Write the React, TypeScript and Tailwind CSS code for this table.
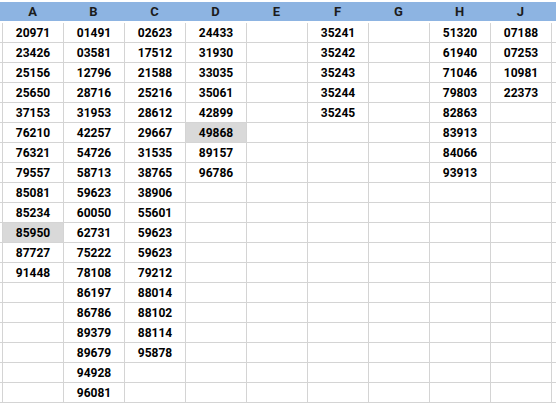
const headers = ["A", "B", "C", "D", "E", "F", "G", "H", "J"];

const columns: string[][] = [
  ["20971", "23426", "25156", "25650", "37153", "76210", "76321", "79557", "85081", "85234", "85950", "87727", "91448"],
  ["01491", "03581", "12796", "28716", "31953", "42257", "54726", "58713", "59623", "60050", "62731", "75222", "78108", "86197", "86786", "89379", "89679", "94928", "96081"],
  ["02623", "17512", "21588", "25216", "28612", "29667", "31535", "38765", "38906", "55601", "59623", "59623", "79212", "88014", "88102", "88114", "95878"],
  ["24433", "31930", "33035", "35061", "42899", "49868", "89157", "96786"],
  [],
  ["35241", "35242", "35243", "35244", "35245"],
  [],
  ["51320", "61940", "71046", "79803", "82863", "83913", "84066", "93913"],
  ["07188", "07253", "10981", "22373"],
];

// cells shaded grey in the sheet: "col:row"
const shaded = new Set(["0:10", "3:5"]);

const ROWS = 19;

export default function App() {
  return (
    <div className="w-[556px] h-[403px] overflow-hidden bg-white font-['Roboto',sans-serif] text-black">
      <div className="h-[23px] pt-[2px]">
        <div className="flex h-[19px] bg-[#8db4e2] pl-[2px]">
          {headers.map((h) => (
            <div key={h} className="flex w-[61px] items-center justify-center pt-[1px] text-[13px] font-bold text-[#1c1c1c]">
              {h}
            </div>
          ))}
        </div>
      </div>
      {Array.from({ length: ROWS }, (_, r) => (
        <div key={r} className="flex h-[20px] border-b border-[#d4d4d4]">
          <div className="w-[2px] shrink-0" />
          {columns.map((col, c) => (
            <div
              key={c}
              className={`flex w-[61px] shrink-0 items-center justify-center border-l border-[#d4d4d4] pt-[1px] text-[12px] font-bold ${
                shaded.has(`${c}:${r}`) ? "bg-[#d9d9d9]" : ""
              }`}
            >
              {col[r] ?? ""}
            </div>
          ))}
          <div className="flex-1 border-l border-[#d4d4d4]" />
        </div>
      ))}
    </div>
  );
}
